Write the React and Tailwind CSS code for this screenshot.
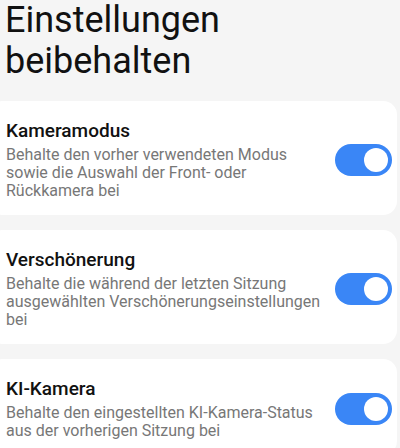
import React, { useState } from 'react';

const items = [
  {
    title: 'Kameramodus',
    desc: 'Behalte den vorher verwendeten Modus sowie die Auswahl der Front- oder Rückkamera bei',
  },
  {
    title: 'Verschönerung',
    desc: 'Behalte die während der letzten Sitzung ausgewählten Verschönerungseinstellungen bei',
  },
  {
    title: 'KI-Kamera',
    desc: 'Behalte den eingestellten KI-Kamera-Status aus der vorherigen Sitzung bei',
  },
];

function Toggle({ on, onClick }) {
  return (
    <button
      onClick={onClick}
      className={`relative w-[57px] h-[32px] rounded-full shrink-0 ${on ? 'bg-[#3a86f6]' : 'bg-[#d0d0d0]'}`}
    >
      <span
        className={`absolute top-[4px] w-[24px] h-[24px] rounded-full bg-white ${on ? 'right-[4px]' : 'left-[4px]'}`}
      />
    </button>
  );
}

export default function App() {
  const [state, setState] = useState([true, true, true]);

  return (
    <div
      className="w-[400px] h-[448px] overflow-hidden bg-[#f5f5f5]"
      style={{ fontFamily: 'Roboto, "Noto Sans", sans-serif' }}
    >
      {/* Page title */}
      <h1 className="pl-[5px] text-[36px] leading-[41px] text-[#111] font-normal">
        Einstellungen
        <br />
        beibehalten
      </h1>

      <div className="mt-[19px] flex flex-col gap-[15px]">
        {items.map((it, i) => (
          <div
            key={it.title}
            className="-ml-3 mr-[3px] bg-white rounded-[14px] pl-[18px] pr-[5px] pt-[18px] pb-[15px] flex items-center"
          >
            <div className="flex-1 pr-[8px]">
              <div className="text-[19px] leading-[24px] font-medium text-[#111]">{it.title}</div>
              <div className="mt-[3px] text-[16px] leading-[18px] text-[#777] max-w-[318px]">
                {it.desc}
              </div>
            </div>
            <Toggle
              on={state[i]}
              onClick={() => setState(s => s.map((v, j) => (j === i ? !v : v)))}
            />
          </div>
        ))}
      </div>
    </div>
  );
}
